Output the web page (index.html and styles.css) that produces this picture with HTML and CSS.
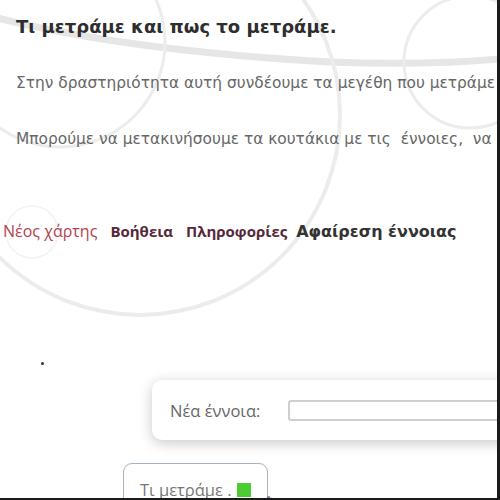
FILE: index.html
```html
<!DOCTYPE html>
<html lang="el">
<head>
<meta charset="utf-8">
<title>Τι μετράμε και πως το μετράμε</title>
<link rel="stylesheet" href="styles.css">
</head>
<body>
<div class="page">
  <svg class="backdrop" width="500" height="500" viewBox="0 0 500 500" aria-hidden="true">
    <!-- sweeping band across the header -->
    <path class="band" d="M -10 16 Q 120 50 330 62 Q 430 66 510 58"/>
    <!-- large ring behind the text -->
    <circle class="ring" cx="140" cy="115" r="200"/>
    <!-- smaller rings -->
    <circle class="ring thin" cx="60" cy="42" r="105"/>
    <circle class="ring thin" cx="470" cy="62" r="66"/>
    <circle class="ring faint" cx="32" cy="232" r="26"/>
  </svg>

  <main class="content">
    <h1 class="title">Τι μετράμε και πως το μετράμε.</h1>
    <p class="intro">Στην δραστηριότητα αυτή συνδέουμε τα μεγέθη που μετράμε</p>
    <p class="intro">Μπορούμε να μετακινήσουμε τα κουτάκια με τις &nbsp;έννοιες, &nbsp;να</p>

    <nav class="menu">
      <a class="menu-link new-map" href="#">Νέος χάρτης</a>
      <a class="menu-link help" href="#">Βοήθεια</a>
      <a class="menu-link info" href="#">Πληροφορίες</a>
      <a class="menu-link remove" href="#">Αφαίρεση έννοιας</a>
    </nav>

    <section class="map">
      <span class="anchor-dot"></span>

      <form class="concept-form">
        <label class="concept-label" for="concept">Νέα έννοια:</label>
        <input class="concept-input" id="concept" type="text">
      </form>

      <div class="node">
        <span class="node-text">Τι μετράμε .</span>
        <span class="node-handle"></span>
      </div>
      <svg class="link" width="240" height="40" viewBox="0 0 240 40" aria-hidden="true">
        <line x1="0" y1="2" x2="230" y2="30"/>
        <circle cx="1" cy="2" r="1.6"/>
      </svg>
    </section>
  </main>
</div>
</body>
</html>
```

FILE: styles.css
```css
html, body {
  margin: 0;
  padding: 0;
  background: #ffffff;
}

.page {
  position: relative;
  width: 497px;
  height: 498px;
  overflow: hidden;
  border-right: 3px solid #1a1a1a;
  border-bottom: 2px solid #1a1a1a;
  font-family: "DejaVu Sans", Verdana, sans-serif;
}

.backdrop {
  position: absolute;
  left: 0;
  top: 0;
  z-index: 0;
  fill: none;
  filter: blur(0.6px);
}

.backdrop .band {
  stroke: #e6e6e6;
  stroke-width: 7;
}

.backdrop .ring {
  stroke: #ececec;
  stroke-width: 4;
}

.backdrop .ring.thin {
  stroke-width: 3;
}

.backdrop .ring.faint {
  stroke: #f2f2f2;
  stroke-width: 1.5;
}

.content {
  position: relative;
  z-index: 1;
}

.title {
  margin: 16px 0 0;
  padding-left: 16px;
  font-size: 18px;
  line-height: 22px;
  font-weight: bold;
  color: #2e2e2e;
  white-space: nowrap;
}

.intro {
  margin: 36px 0 0;
  padding-left: 16px;
  font-size: 15.4px;
  line-height: 18px;
  color: #666666;
  white-space: nowrap;
}

.intro + .intro {
  margin-top: 38px;
}

.menu {
  display: flex;
  align-items: baseline;
  gap: 13px;
  margin-top: 73px;
  padding-left: 3px;
  line-height: 20px;
  white-space: nowrap;
}

.menu-link {
  text-decoration: none;
  font-family: "Open Sans", "Noto Sans", sans-serif;
  font-size: 16px;
}

.menu-link.new-map {
  color: #b5424f;
}

.menu-link.help,
.menu-link.info {
  color: #55283a;
  font-weight: 700;
  font-size: 15px;
}

.menu-link.remove {
  margin-left: -4px;
  font-family: "DejaVu Sans", Verdana, sans-serif;
  font-size: 16px;
  font-weight: bold;
  color: #333333;
}

.map {
  position: relative;
  height: 260px;
}

.anchor-dot {
  position: absolute;
  left: 41px;
  top: 120px;
  width: 3px;
  height: 3px;
  border-radius: 50%;
  background: #333333;
}

.concept-form {
  position: absolute;
  left: 152px;
  top: 138px;
  width: 400px;
  height: 60px;
  margin: 0;
  display: flex;
  align-items: center;
  gap: 28px;
  padding-left: 18px;
  box-sizing: border-box;
  background: #ffffff;
  border-radius: 10px;
  box-shadow: 0 3px 14px rgba(0, 0, 0, 0.22);
}

.concept-label {
  font-family: "Open Sans", "Noto Sans", sans-serif;
  font-size: 16.5px;
  color: #666666;
}

.concept-input {
  width: 260px;
  height: 21px;
  box-sizing: border-box;
  border: 2px solid #cfcfcf;
  border-radius: 3px;
  background: #ffffff;
  padding: 0;
}

.node {
  position: absolute;
  left: 123px;
  top: 221px;
  width: 145px;
  height: 50px;
  box-sizing: border-box;
  display: flex;
  align-items: flex-start;
  gap: 5px;
  padding: 16px 0 0 16px;
  background: #ffffff;
  border: 1.5px solid #a7b4c0;
  border-radius: 9px;
}

.node-text {
  font-family: "Open Sans", "Noto Sans", sans-serif;
  font-size: 16.5px;
  line-height: 20px;
  color: #777777;
}

.node-handle {
  width: 14px;
  height: 14px;
  margin-top: 3px;
  background: #4ccc33;
}

.link {
  position: absolute;
  left: 267px;
  top: 254px;
  stroke: #8a93b8;
  stroke-width: 1.5;
  fill: #555555;
}
```
